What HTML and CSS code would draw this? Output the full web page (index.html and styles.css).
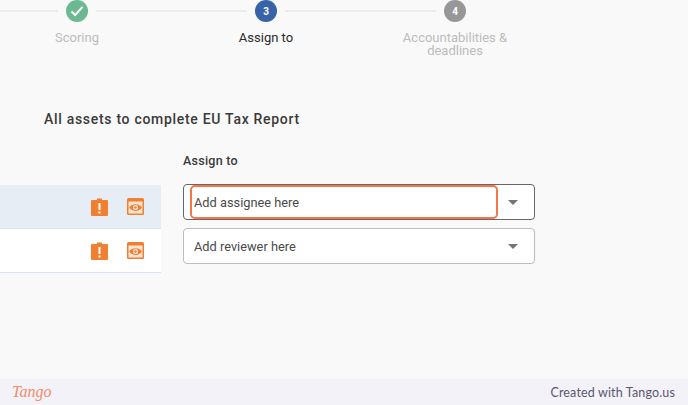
FILE: index.html
```html
<!DOCTYPE html>
<html lang="en">
<head>
<meta charset="utf-8">
<title>Assign to</title>
<link rel="stylesheet" href="styles.css">
</head>
<body>
<div class="page">
  <main class="main">
    <ol class="stepper">
      <li class="step">
        <div class="rail"><span class="line"></span><span class="dot dot-done"><svg width="14" height="12" viewBox="0 0 14 12"><path d="M1.500 6.500L5.200 10L12.500 1.800" fill="none" stroke="#fff" stroke-width="2"/></svg></span><span class="line"></span></div>
        <span class="label">Scoring</span>
      </li>
      <li class="step">
        <div class="rail"><span class="line"></span><span class="dot dot-active">3</span><span class="line"></span></div>
        <span class="label label-active">Assign to</span>
      </li>
      <li class="step">
        <div class="rail"><span class="line"></span><span class="dot dot-todo">4</span><span class="line line-none"></span></div>
        <span class="label">Accountabilities &amp; deadlines</span>
      </li>
    </ol>
    <h1 class="title">All assets to complete EU Tax Report</h1>
    <div class="columns">
      <div class="assets">
        <div class="asset asset-selected">
          <svg class="icon" width="17" height="18" viewBox="0 0 17 18"><path d="M1 2h5V0.500h5V2h5a1 1 0 0 1 1 1v14a1 1 0 0 1-1 1H1a1 1 0 0 1-1-1V3a1 1 0 0 1 1-1z" fill="#f07f32"/><path d="M7.500 5h2v7h-2zM7.500 13.500h2v2h-2z" fill="#fff"/></svg>
          <svg class="icon" width="17" height="17" viewBox="0 0 17 17"><rect width="17" height="17" rx="1.500" fill="#f07f32"/><rect x="1.500" y="3.500" width="14" height="12" fill="#fbe6d4"/><path d="M2 9.500C5 5 12 5 15 9.500C12 14 5 14 2 9.500z" fill="#f07f32"/><circle cx="8.500" cy="9.500" r="2.500" fill="#fbe6d4"/><circle cx="8.500" cy="9.500" r="1.200" fill="#f07f32"/></svg>
        </div>
        <div class="asset">
          <svg class="icon" width="17" height="18" viewBox="0 0 17 18"><path d="M1 2h5V0.500h5V2h5a1 1 0 0 1 1 1v14a1 1 0 0 1-1 1H1a1 1 0 0 1-1-1V3a1 1 0 0 1 1-1z" fill="#f07f32"/><path d="M7.500 5h2v7h-2zM7.500 13.500h2v2h-2z" fill="#fff"/></svg>
          <svg class="icon" width="17" height="17" viewBox="0 0 17 17"><rect width="17" height="17" rx="1.500" fill="#f07f32"/><rect x="1.500" y="3.500" width="14" height="12" fill="#fbe6d4"/><path d="M2 9.500C5 5 12 5 15 9.500C12 14 5 14 2 9.500z" fill="#f07f32"/><circle cx="8.500" cy="9.500" r="2.500" fill="#fbe6d4"/><circle cx="8.500" cy="9.500" r="1.200" fill="#f07f32"/></svg>
        </div>
      </div>
      <div class="form">
        <h2 class="form-title">Assign to</h2>
        <div class="select select-focus">
          <span>Add assignee here</span><span class="caret"></span>
          <span class="highlight"></span>
        </div>
        <div class="select">
          <span>Add reviewer here</span><span class="caret"></span>
        </div>
      </div>
    </div>
  </main>
  <footer class="footer">
    <span class="logo">Tango</span>
    <span class="credit">Created with Tango.us</span>
  </footer>
</div>
</body>
</html>
```
FILE: styles.css
```css
* { box-sizing: border-box; }
html, body { margin: 0; padding: 0; }
body { width: 688px; height: 405px; overflow: hidden; font-family: Roboto, sans-serif; }
.page { display: flex; flex-direction: column; height: 405px; background: #f9f9f9; }
.main { flex: 1; overflow: hidden; }
.stepper { display: flex; list-style: none; margin: 0 0 0 -17.500px; padding: 0; }
.step { width: 189px; display: flex; flex-direction: column; align-items: center; }
.rail { width: 100%; height: 22px; display: flex; align-items: center; gap: 8px; }
.line { flex: 1; height: 2px; background: #ebebeb; }
.line-none { background: transparent; }
.dot { width: 22px; height: 22px; flex: none; border-radius: 50%; display: flex; align-items: center; justify-content: center; color: #fff; font-size: 10px; font-weight: 700; }
.dot-done { background: #6cb892; }
.dot-active { background: #3763a8; }
.dot-todo { background: #979797; }
.label { width: 120px; margin-top: 9px; text-align: center; font-size: 13px; line-height: 13px; color: #bcbcbc; }
.label-active { color: #2b2b2b; }
.title { margin: 52px 0 0 44px; font-size: 14px; line-height: 20px; font-weight: 500; letter-spacing: .7px; color: #3a3a3a; }
.columns { display: flex; margin-top: 23px; gap: 22px; }
.assets { width: 161px; padding-top: 33px; }
.asset { height: 44px; display: flex; align-items: center; justify-content: flex-end; gap: 19px; padding-right: 17px; background: #fff; border-bottom: 1px solid #d9e3ef; }
.asset-selected { background: #e7edf5; border-bottom-color: #dde5f0; }
.form { width: 352px; }
.form-title { margin: 0 0 14px; font-size: 12.500px; line-height: 18px; font-weight: 500; letter-spacing: .25px; color: #3a3a3a; }
.select { position: relative; height: 36px; margin-bottom: 8px; padding: 0 16px 0 10px; display: flex; align-items: center; justify-content: space-between; background: #fff; border: 1px solid #bdbdbd; border-radius: 4px; font-size: 12.800px; color: #4a4a4a; }
.select-focus { border-color: #666; }
.caret { width: 0; height: 0; border-left: 5px solid transparent; border-right: 5px solid transparent; border-top: 5px solid #757575; }
.highlight { position: absolute; left: 6px; top: 0; width: 308px; height: 34px; border: 2px solid #f6764a; border-radius: 5px; }
.footer { height: 26px; flex: none; display: flex; align-items: center; justify-content: space-between; padding: 0 13px 0 12px; background: #f3f2f8; }
.logo { font-family: "Liberation Serif", serif; font-style: italic; font-size: 16px; color: #f58a68; }
.credit { font-family: Lato, sans-serif; font-size: 12.500px; letter-spacing: .15px; color: #5a5670; }
```
